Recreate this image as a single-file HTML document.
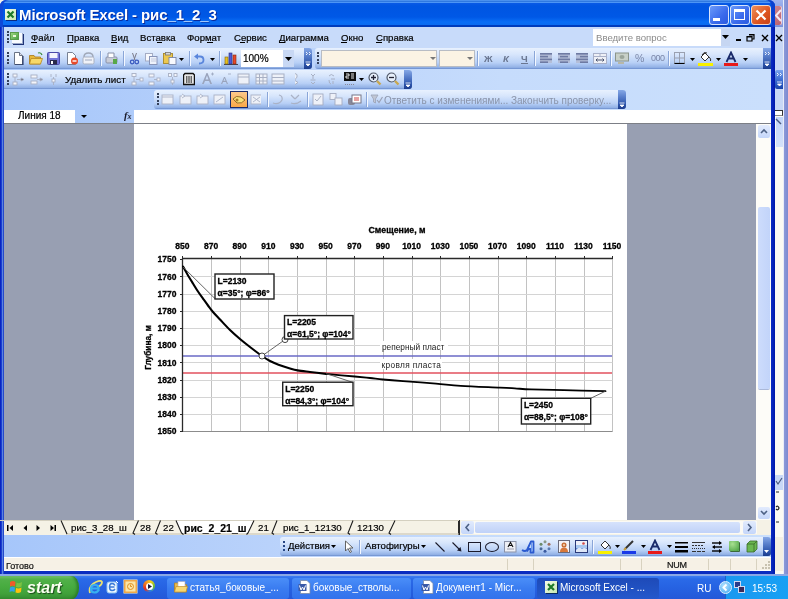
<!DOCTYPE html>
<html><head><meta charset="utf-8">
<style>
*{margin:0;padding:0;box-sizing:border-box}
.t,svg{will-change:transform}
html,body{width:788px;height:599px;overflow:hidden;background:#f4f2ea;font-family:"Liberation Sans",sans-serif;}
.a{position:absolute}
.t{position:absolute;white-space:nowrap;line-height:1}
#title{left:0;top:0;width:775px;height:27px;border-radius:6px 6px 0 0;box-shadow:inset -3.5px 0 0 #0a40d0,inset 3px 0 0 #1048d8;
 background:linear-gradient(#4a90ee 0,#4a90ee 1px,#2f78e0 1px,#2f78e0 2px,#4d95f5 2px,#4d95f5 3px,#0a5ae6 3px,#0055e2 6px,#0058e6 17px,#0a6ef5 22px,#0a6cf0 25px,#003cc0 25px,#003cb8 27px)}
.dock{background:linear-gradient(90deg,#a6c6fa 0,#bcd4fb 40%,#c6dcfc 65%,#cadffc 100%)}
.tb{position:absolute;border-radius:3px;background:linear-gradient(#e8f1fe 0,#d8e6fc 30%,#b8d0f6 70%,#93b2e6 92%,#6a8ccc 100%)}
.grip{position:absolute;width:2px;background:repeating-linear-gradient(#274684 0,#274684 2px,transparent 2px,transparent 4px)}
.chev{position:absolute;background:linear-gradient(#86a8e6,#5a80cc 35%,#2e56ac 75%,#1c3c8c);border-radius:0 3px 3px 0}
.sep{position:absolute;width:1px;background:#8aa6d8;box-shadow:1px 0 0 #f4f8ff}
.menu{font-size:9.6px;color:#000;top:33px}
.menu,.t[style*="color:#000"],.t[style*="color:#111"]{-webkit-text-stroke:0.2px currentColor}
</style></head><body>
<!-- background window behind (right) -->
<div class="a" style="left:770px;top:0;width:18px;height:575px;background:#fbfaf3"></div>
<div class="a" style="left:770px;top:0;width:18px;height:27px;background:linear-gradient(#a0b4ee,#8ea4e8 30%,#94aaec 80%,#7a90d8)"></div>
<div class="a" style="left:772px;top:6px;width:10px;height:19px;background:linear-gradient(135deg,#d08890,#b86070);border-radius:0 2px 2px 0;box-shadow:inset -1px 0 0 #e8d0e0"></div>
<svg class="a" style="left:772px;top:6px" width="10" height="19"><path d="M9 4L4 9.5L9 15" stroke="#f4e8f0" stroke-width="2" fill="none"/></svg>
<div class="a" style="left:770px;top:27px;width:14px;height:83px;background:#c8d8f6"></div>
<svg class="a" style="left:775px;top:34px" width="8" height="8"><path d="M1 1L7 7M7 1L1 7" stroke="#000" stroke-width="1.3"/></svg>
<div class="a" style="left:775px;top:70px;width:9px;height:19px;background:linear-gradient(#7aa4ee,#2a5cc8 70%,#1a44a8);border-radius:2px 0 0 2px"></div>
<svg class="a" style="left:775px;top:70px" width="9" height="19"><path d="M2 3L3.5 4.5L2 6M5 3L6.5 4.5L5 6" stroke="#fff" stroke-width="0.9" fill="none"/><path d="M2 12H7M2.5 14H6.5L4.5 16Z" stroke="#fff" stroke-width="0.8" fill="#fff"/></svg>
<div class="a" style="left:775px;top:110px;width:8px;height:6px;background:#fff;border-top:1px solid #333;border-right:1.5px solid #333;border-bottom:1px solid #888"></div>
<div class="a" style="left:776px;top:117px;width:7px;height:30px;background:linear-gradient(#c4d6f8,#d4e2fa)"></div>
<svg class="a" style="left:775px;top:117px" width="8" height="10"><path d="M1 2L6 7" stroke="#4a5a80" stroke-width="1.4"/></svg>
<div class="a" style="left:775px;top:475px;width:8px;height:15px;background:#c8d8f6"></div>
<svg class="a" style="left:775px;top:475px" width="8" height="60"><path d="M1 6L3 9L7 3" stroke="#4a5a80" stroke-width="1.2" fill="none"/><path d="M1 17H4M1 32Q3 30 4 33Q3 36 1 34M1 47H4" stroke="#222" stroke-width="1.2" fill="none"/></svg>
<div class="a" style="left:775px;top:537px;width:9px;height:34px;background:#f4efe2"></div>
<div class="a" style="left:783px;top:0;width:1px;height:575px;background:#e8ecf8"></div>
<div class="a" style="left:784px;top:0;width:4px;height:575px;background:linear-gradient(90deg,#8c9ad8,#7c8ad0)"></div>
<!-- main window frame -->
<div class="a" style="left:0;top:0;width:775px;height:575px;background:linear-gradient(90deg,#0018b8 0,#1a3ed0 1.5px,#5a82e0 2.5px,#0a2cc0 4px,#0a2cc0 771px,#0828c0 772px,#0018a8 775px);border-radius:7px 7px 0 0"></div>
<div id="title" class="a"></div>
<div class="a" style="left:5px;top:9px;width:11px;height:11px;background:linear-gradient(135deg,#f4fbe8,#c8e8b0);box-shadow:1px 1px 0 #0a2a80"></div>
<svg class="a" style="left:5px;top:9px" width="11" height="11"><path d="M2.5 2.5L8.5 8.5M8.5 2.5L2.5 8.5" stroke="#1e7a2a" stroke-width="2.2"/></svg>
<div class="t" style="left:18.5px;top:7px;font-size:15px;letter-spacing:-0.12px;font-weight:bold;color:#fff;text-shadow:1px 1px 0 #0a2a9a">Microsoft Excel - рис_1_2_3</div>
<!-- title buttons -->
<div class="a" style="left:709px;top:5px;width:20px;height:20px;border:1px solid #d8e4fc;border-radius:3px;background:linear-gradient(135deg,#6a9afa,#3a6aec 60%,#2a5ae0)"></div>
<div class="a" style="left:713px;top:18px;width:7px;height:3px;background:#fff"></div>
<div class="a" style="left:730px;top:5px;width:20px;height:20px;border:1px solid #d8e4fc;border-radius:3px;background:linear-gradient(135deg,#6a9afa,#3a6aec 60%,#2a5ae0)"></div>
<div class="a" style="left:734px;top:9px;width:11px;height:11px;border:1.2px solid #fff;border-top-width:3px"></div>
<div class="a" style="left:751px;top:5px;width:20px;height:20px;border:1px solid #f4d8c8;border-radius:3px;background:linear-gradient(135deg,#f0905a,#dc5420 60%,#c84418)"></div>
<svg class="a" style="left:751px;top:5px" width="20" height="20"><path d="M5.5 5.5L14.5 14.5M14.5 5.5L5.5 14.5" stroke="#fff" stroke-width="2.2"/></svg>

<!-- client area background (dock) -->
<div class="a dock" style="left:4px;top:27px;width:767px;height:97px"></div>


<!-- menu bar -->
<div class="a" style="left:4px;top:27px;width:767px;height:21px;background:#c8dbfa"></div>
<div class="grip" style="left:6.5px;top:31px;height:12px;width:2px;background:repeating-linear-gradient(#34405a 0,#34405a 2px,transparent 2px,transparent 3.4px)"></div>
<div class="a" style="left:12px;top:33px;width:11px;height:11px;background:#f8fbff;box-shadow:1px 1px 0 #1f3377,inset -1px -1px 0 #9aa8c8"></div>
<div class="a" style="left:10px;top:32px;width:9px;height:8px;background:linear-gradient(135deg,#a8dc88,#3f9a3c);box-shadow:inset 0 0 0 1px #5a9a4a"></div>
<div class="a" style="left:13px;top:35px;width:3px;height:2px;background:#eaf6d8"></div>
<div class="t menu" style="left:31px">Файл</div>
<div class="t menu" style="left:67px">Правка</div>
<div class="t menu" style="left:111px">Вид</div>
<div class="t menu" style="left:140px">Вставка</div>
<div class="t menu" style="left:187px">Формат</div>
<div class="t menu" style="left:234px">Сервис</div>
<div class="t menu" style="left:279px">Диаграмма</div>
<div class="t menu" style="left:341px">Окно</div>
<div class="t menu" style="left:376px">Справка</div>
<!-- menu underlines -->
<div class="a" style="left:31px;top:42px;width:6px;height:1px;background:#000"></div>
<div class="a" style="left:67px;top:42px;width:6px;height:1px;background:#000"></div>
<div class="a" style="left:111px;top:42px;width:6px;height:1px;background:#000"></div>
<div class="a" style="left:157px;top:42px;width:5px;height:1px;background:#000"></div>
<div class="a" style="left:207px;top:42px;width:6px;height:1px;background:#000"></div>
<div class="a" style="left:240px;top:42px;width:5px;height:1px;background:#000"></div>
<div class="a" style="left:279px;top:42px;width:6px;height:1px;background:#000"></div>
<div class="a" style="left:341px;top:42px;width:6px;height:1px;background:#000"></div>
<div class="a" style="left:376px;top:42px;width:6px;height:1px;background:#000"></div>
<!-- ask box -->
<div class="a" style="left:593px;top:29px;width:128px;height:17px;background:#fff"></div>
<div class="t" style="left:596px;top:33px;font-size:9.6px;color:#8a8a8a">Введите вопрос</div>
<div class="a" style="left:721px;top:29px;width:9px;height:17px;background:#c6d6f2"></div>
<svg class="a" style="left:722px;top:35px" width="7" height="4"><path d="M0 0H7L3.5 4Z" fill="#000"/></svg>
<div class="a" style="left:736px;top:39px;width:5px;height:2px;background:#000"></div>
<svg class="a" style="left:746px;top:33px" width="9" height="9"><path d="M3 1.5H8V6H6.5M1 3.5H6V8H1Z" stroke="#000" stroke-width="1.2" fill="none"/><rect x="3" y="1" width="5" height="1.5" fill="#000"/><rect x="1" y="3" width="5" height="1.5" fill="#000"/></svg>
<svg class="a" style="left:761px;top:34px" width="8" height="8"><path d="M1 1L7 7M7 1L1 7" stroke="#000" stroke-width="1.4"/></svg>

<!-- standard toolbar -->
<div class="tb" style="left:4px;top:48px;width:308px;height:21px;border-radius:0 3px 3px 0"></div>
<div class="grip" style="left:6.5px;top:52px;height:12px;width:2px;background:repeating-linear-gradient(#34405a 0,#34405a 2px,transparent 2px,transparent 3.4px)"></div>
<svg class="a" style="left:13px;top:52px" width="11" height="13"><path d="M1.5 0.5H6.5L9.5 3.5V12.5H1.5Z" fill="#fff" stroke="#5a6478" stroke-width="0.9"/><path d="M6.5 0.5V3.5H9.5" fill="#dde" stroke="#5a6478" stroke-width="0.9"/><path d="M10 4V13H2" stroke="#1a2a5a" stroke-width="1" fill="none"/></svg>
<svg class="a" style="left:29px;top:52px" width="14" height="13"><path d="M0.5 3.5H5L6 5H11.5V12H0.5Z" fill="#e8b838" stroke="#a87818" stroke-width="0.8"/><path d="M2 6.5H13.5L11.5 12H0.5Z" fill="#f8d868" stroke="#b88820" stroke-width="0.8"/><path d="M9 1Q12 0 13 3" stroke="#3a8a3a" stroke-width="1.2" fill="none"/></svg>
<svg class="a" style="left:47px;top:52px" width="13" height="13"><rect x="0.5" y="0.5" width="12" height="12" rx="1" fill="#7274d8" stroke="#4a4aa8"/><rect x="2.5" y="1" width="8" height="5" fill="#f4f4fc"/><rect x="3" y="8" width="7" height="4.5" fill="#2a2a4a"/><rect x="4" y="9" width="2" height="3" fill="#fff"/></svg>
<svg class="a" style="left:66px;top:52px" width="13" height="13"><path d="M1.5 0.5H6.5L9.5 3.5V12.5H1.5Z" fill="#fff" stroke="#6a7488" stroke-width="0.9"/><circle cx="8.5" cy="9" r="3.5" fill="#e84a2a"/><rect x="6.5" y="8.3" width="4" height="1.4" fill="#fff"/></svg>
<svg class="a" style="left:82px;top:52px" width="13" height="13"><path d="M2 5Q2 1 6.5 1Q11 1 11 5" stroke="#a0a8b8" stroke-width="1.5" fill="none"/><rect x="1" y="5" width="11" height="7" rx="1.5" fill="#f0f2f8" stroke="#a8b0c0"/><rect x="3" y="7" width="7" height="2" fill="#c8cedc"/></svg>
<div class="sep" style="left:100px;top:51px;height:15px"></div>
<svg class="a" style="left:105px;top:52px" width="13" height="13"><rect x="1" y="5" width="11" height="6" rx="1" fill="#c8ccd8" stroke="#8890a8"/><path d="M3 5V1H9V5" fill="#fff" stroke="#8890a8"/><rect x="8" y="7" width="4" height="5" fill="#58a848"/></svg>
<div class="sep" style="left:123px;top:51px;height:15px"></div>
<svg class="a" style="left:129px;top:52px" width="11" height="13"><path d="M3.5 1L6 8M7.5 1L5 8" stroke="#7a7a88" stroke-width="1"/><circle cx="3.2" cy="10" r="1.8" fill="none" stroke="#3a5ac0" stroke-width="1.3"/><circle cx="7.8" cy="10" r="1.8" fill="none" stroke="#3a5ac0" stroke-width="1.3"/></svg>
<svg class="a" style="left:145px;top:53px" width="13" height="12"><rect x="0.5" y="0.5" width="7" height="7.5" fill="#f8f9fd" stroke="#a4acc4"/><rect x="4.5" y="3.5" width="7.5" height="8" fill="#eef2fb" stroke="#8894b8"/><path d="M6 6H11M6 8H11" stroke="#b8c0d8" stroke-width="0.8"/></svg>
<svg class="a" style="left:163px;top:52px" width="14" height="13"><rect x="0.5" y="1.5" width="9" height="10" fill="#ecc850" stroke="#a88828" stroke-width="0.9"/><rect x="2.5" y="0.5" width="5" height="2.5" fill="#d8d8d8" stroke="#777" stroke-width="0.8"/><rect x="6" y="5.5" width="7" height="7" fill="#f8f9fd" stroke="#7a86a8" stroke-width="0.9"/></svg>
<svg class="a" style="left:179px;top:58px" width="5" height="3"><path d="M0 0H5L2.5 3Z" fill="#000"/></svg>
<div class="sep" style="left:189px;top:51px;height:15px"></div>
<svg class="a" style="left:193px;top:53px" width="12" height="12"><path d="M4 3.5H7Q10.5 3.5 10.5 7Q10.5 10.5 6 10.5" stroke="#5a86dc" stroke-width="1.8" fill="none"/><path d="M1 3.5L5 0.5V6.5Z" fill="#5a86dc"/></svg>
<svg class="a" style="left:210px;top:58px" width="5" height="3"><path d="M0 0H5L2.5 3Z" fill="#000"/></svg>
<div class="sep" style="left:219px;top:51px;height:15px"></div>
<svg class="a" style="left:224px;top:52px" width="14" height="13"><rect x="0" y="12" width="14" height="1" fill="#445"/><rect x="1" y="5" width="3" height="7" fill="#e8c020" stroke="#806810" stroke-width="0.6"/><rect x="5" y="1" width="3" height="11" fill="#4a5ad8" stroke="#283078" stroke-width="0.6"/><rect x="9" y="3" width="3" height="9" fill="#e84828" stroke="#802810" stroke-width="0.6"/></svg>
<div class="a" style="left:241px;top:50px;width:42px;height:17px;background:#fff"></div>
<div class="t" style="left:243px;top:54px;font-size:10px;color:#000">100%</div>
<div class="a" style="left:283px;top:50px;width:11px;height:17px;background:#c8d8f4"></div>
<svg class="a" style="left:285px;top:57px" width="7" height="4"><path d="M0 0H7L3.5 4Z" fill="#000"/></svg>
<div class="chev" style="left:304px;top:48px;width:8px;height:21px"></div>
<svg class="a" style="left:304px;top:50px" width="8" height="18"><path d="M2 2L3.5 3.5L2 5M5 2L6.5 3.5L5 5" stroke="#fff" stroke-width="0.9" fill="none"/><path d="M1.5 12H6.5M2 14H6L4 16Z" stroke="#fff" stroke-width="0.8" fill="#fff"/></svg>

<!-- formatting toolbar -->
<div class="tb" style="left:315px;top:48px;width:456px;height:21px;border-radius:3px 0 0 3px"></div>
<div class="grip" style="left:317px;top:52px;height:12px;width:2px;background:repeating-linear-gradient(#34405a 0,#34405a 2px,transparent 2px,transparent 3.4px)"></div>
<div class="a" style="left:321px;top:50px;width:116px;height:17px;background:#fbf3e4;border:1px solid #b8bcc4"></div>
<svg class="a" style="left:430px;top:57px" width="6" height="3"><path d="M0 0H6L3 3Z" fill="#777"/></svg>
<div class="a" style="left:439px;top:50px;width:36px;height:17px;background:#fbf3e4;border:1px solid #b8bcc4"></div>
<svg class="a" style="left:467px;top:57px" width="6" height="3"><path d="M0 0H6L3 3Z" fill="#777"/></svg>
<div class="sep" style="left:477px;top:51px;height:15px"></div>
<div class="t" style="left:483.5px;top:53.5px;font-size:9.5px;font-weight:bold;color:#6a7690">Ж</div>
<div class="t" style="left:502.5px;top:53.5px;font-size:9.5px;font-weight:bold;font-style:italic;color:#6a7690">К</div>
<div class="t" style="left:520.5px;top:53.5px;font-size:9.5px;font-weight:bold;color:#6a7690">Ч</div>
<div class="a" style="left:520.5px;top:62.5px;width:7px;height:1px;background:#6a7690"></div>
<div class="sep" style="left:534px;top:51px;height:15px"></div>
<svg class="a" style="left:540px;top:53px" width="70" height="11">
<rect x="0" y="0" width="12" height="10" fill="#b4bed8"/><rect x="18" y="0" width="12" height="10" fill="#b4bed8"/><rect x="36" y="0" width="12" height="10" fill="#b4bed8"/>
<g fill="#6e7aa2"><rect x="0" y="0" width="12" height="1.6"/><rect x="0" y="2.8" width="8" height="1.6"/><rect x="0" y="5.6" width="12" height="1.6"/><rect x="0" y="8.4" width="8" height="1.6"/>
<rect x="18" y="0" width="12" height="1.6"/><rect x="20" y="2.8" width="8" height="1.6"/><rect x="18" y="5.6" width="12" height="1.6"/><rect x="20" y="8.4" width="8" height="1.6"/>
<rect x="36" y="0" width="12" height="1.6"/><rect x="40" y="2.8" width="8" height="1.6"/><rect x="36" y="5.6" width="12" height="1.6"/><rect x="40" y="8.4" width="8" height="1.6"/></g>
<rect x="53.5" y="0.5" width="13" height="10" fill="#eef0f6" stroke="#a8b0c8"/><path d="M53.5 3.5H66.5M60 0.5V3.5" stroke="#a8b0c8"/><path d="M56 7H64M57.5 5.5L56 7L57.5 8.5M62.5 5.5L64 7L62.5 8.5" stroke="#4a5470" fill="none"/></svg>
<div class="sep" style="left:610px;top:51px;height:15px"></div>
<svg class="a" style="left:615px;top:52px" width="14" height="13"><rect x="0.5" y="1" width="13" height="8" fill="#c8d0c8" stroke="#8a948a"/><ellipse cx="7" cy="5" rx="2.5" ry="2" fill="#9aa49a"/><rect x="3" y="10" width="6" height="2" fill="#b8b8a8"/></svg>
<div class="t" style="left:635px;top:53px;font-size:10.5px;color:#7a86a8">%</div>
<div class="t" style="left:651px;top:54px;font-size:9px;color:#7a86a8;letter-spacing:-0.5px">000</div>
<div class="sep" style="left:668px;top:51px;height:15px"></div>
<svg class="a" style="left:674px;top:52px" width="11" height="12"><rect x="0.5" y="0.5" width="10" height="11" fill="none" stroke="#9aa0b0"/><path d="M5.5 0.5V11.5M0.5 6H10.5" stroke="#9aa0b0"/><path d="M0.5 11.5H10.5" stroke="#000" stroke-width="1.2"/></svg>
<svg class="a" style="left:690px;top:58px" width="5" height="3"><path d="M0 0H5L2.5 3Z" fill="#000"/></svg>
<svg class="a" style="left:698px;top:51px" width="15" height="15"><path d="M3 6L7 2L11 6L7 10Z" fill="#fff" stroke="#333"/><path d="M4 4Q6 0 9 2" stroke="#333" fill="none"/><path d="M11 6Q13.5 8 12.5 10" stroke="#333" fill="none"/><rect x="0" y="12" width="15" height="3" fill="#f8f000"/></svg>
<svg class="a" style="left:716px;top:58px" width="5" height="3"><path d="M0 0H5L2.5 3Z" fill="#000"/></svg>
<svg class="a" style="left:724px;top:51px" width="14" height="15"><path d="M2.5 11L7 1.5L11.5 11M4.3 7.5H9.7" stroke="#1a2a6a" stroke-width="1.8" fill="none"/><rect x="0" y="12" width="14" height="3" fill="#e81a1a"/></svg>
<svg class="a" style="left:743px;top:58px" width="5" height="3"><path d="M0 0H5L2.5 3Z" fill="#000"/></svg>
<div class="chev" style="left:763px;top:48px;width:8px;height:21px;border-radius:0"></div>
<svg class="a" style="left:763px;top:50px" width="8" height="18"><path d="M2 2L3.5 3.5L2 5M5 2L6.5 3.5L5 5" stroke="#fff" stroke-width="0.9" fill="none"/><path d="M1.5 12H6.5M2 14H6L4 16Z" stroke="#fff" stroke-width="0.8" fill="#fff"/></svg>

<!-- row 3 toolbar (chart) -->
<div class="tb" style="left:4px;top:70px;width:408px;height:19px;border-radius:0 3px 3px 0"></div>
<div class="grip" style="left:6.5px;top:73px;height:12px;width:2px;background:repeating-linear-gradient(#34405a 0,#34405a 2px,transparent 2px,transparent 3.4px)"></div>
<svg class="a" style="left:12px;top:73px" width="150" height="13"><g stroke="#a8b0c4" fill="#f4f6fb" stroke-width="0.9">
<rect x="1" y="1" width="4" height="3"/><rect x="1" y="9" width="4" height="3"/><path d="M3 4V9M5 6.5H9"/><path d="M9 5L12 6.5L9 8Z" fill="#556"/>
<rect x="19" y="2" width="6" height="3"/><rect x="19" y="8" width="6" height="3"/><path d="M25 6.5H29"/><path d="M28 5L31 6.5L28 8Z" fill="#889"/>
<path d="M39 1V4M44 1V4M41.5 4V12"/><rect x="40" y="6" width="3" height="3"/>
<rect x="120" y="0.5" width="4" height="3"/><rect x="120" y="9" width="4" height="3"/><path d="M122 3.5V9M124 6.5H128"/><rect x="128" y="5" width="3" height="3"/>
<rect x="137" y="1" width="5" height="3"/><rect x="137" y="9" width="5" height="3"/><path d="M142 6.5H145"/><rect x="145" y="5" width="3" height="3"/>
</g></svg>
<div class="t" style="left:65px;top:74.5px;font-size:9.8px;color:#000">Удалить лист</div>
<svg class="a" style="left:168px;top:73px" width="10" height="13"><g stroke="#a8b0c4" fill="#f4f6fb" stroke-width="0.9"><rect x="0.5" y="0.5" width="3" height="3"/><rect x="6" y="0.5" width="3" height="3"/><path d="M4.5 4V12"/><rect x="3" y="7" width="3" height="3"/></g></svg>
<svg class="a" style="left:183px;top:72px" width="12" height="14"><path d="M2 1.5H10L11.5 3V12.5H0.5V3Z" fill="#e8e8e8" stroke="#111" stroke-width="1.4"/><rect x="3" y="4" width="6" height="7" fill="#666"/><path d="M4.5 4V11M6 4V11M7.5 4V11" stroke="#ddd" stroke-width="0.6"/></svg>
<svg class="a" style="left:202px;top:72px" width="30" height="14"><g fill="#9aa4bc"><path d="M0 12L4.5 1H5.5L10 12H8.3L7 9H3L1.7 12ZM3.5 7.5H6.5L5 3.5Z"/><path d="M9 2H12M10.5 0.5V3.5" stroke="#9aa4bc" stroke-width="0.8"/>
<path d="M19 12L22 5H23L26 12H24.8L24 10H21L20.2 12ZM21.5 8.7H23.5L22.5 6.3Z"/><path d="M26 2H29" stroke="#9aa4bc" stroke-width="0.8"/></g></svg>
<svg class="a" style="left:237px;top:73px" width="65" height="13"><g stroke="#a8b0c4" fill="#eef1f8" stroke-width="1">
<rect x="1" y="1" width="11" height="10"/><path d="M1 4H12"/>
<rect x="19" y="1" width="11" height="10"/><path d="M19 4.5H30M19 8H30M22.5 1V11M26 1V11"/>
<rect x="35" y="1" width="12" height="10"/><path d="M35 4.5H47M35 8H47"/>
<path d="M58 0.5Q61 1 60 4Q59 6 58 6.5M58 7.5L61 9.5L58 11.5"/>
</g></svg>
<svg class="a" style="left:310px;top:73px" width="30" height="13"><g stroke="#a8b0c4" fill="none" stroke-width="1">
<path d="M1 1L3 3L5 1M3 3V6M1 9L3 11L5 9M0.5 7H5.5"/>
<path d="M19 3Q21 0 24 3M19 7Q19 11 21 11M23 8V11M21 6H25"/>
</g></svg>
<div class="a" style="left:344px;top:72px;width:12px;height:9px;background:#101010"></div>
<svg class="a" style="left:344px;top:72px" width="12" height="14"><path d="M2 2H5V4H2V6H5M7 2H10M7 4H10M7 6H10" stroke="#fff" stroke-width="0.9" fill="none"/><path d="M1 12.5H11" stroke="#889" stroke-dasharray="1 1"/></svg>
<svg class="a" style="left:359px;top:78px" width="5" height="3"><path d="M0 0H5L2.5 3Z" fill="#000"/></svg>
<svg class="a" style="left:368px;top:72px" width="14" height="14"><circle cx="5.5" cy="5.5" r="4.5" fill="#e8f0fc" stroke="#505868" stroke-width="1.2"/><path d="M3 5.5H8M5.5 3V8" stroke="#223" stroke-width="1.3"/><path d="M9 9L12.5 12.5" stroke="#c8a850" stroke-width="2.4"/></svg>
<svg class="a" style="left:386px;top:72px" width="14" height="14"><circle cx="5.5" cy="5.5" r="4.5" fill="#e8f0fc" stroke="#505868" stroke-width="1.2"/><path d="M3 5.5H8" stroke="#223" stroke-width="1.3"/><path d="M9 9L12.5 12.5" stroke="#c8a850" stroke-width="2.4"/></svg>
<div class="chev" style="left:404px;top:70px;width:8px;height:19px"></div>
<svg class="a" style="left:404px;top:70px" width="8" height="19"><path d="M1.5 13H6.5M2 15H6L4 17Z" stroke="#fff" stroke-width="0.8" fill="#fff"/></svg>

<!-- row 4 reviewing toolbar -->
<div class="tb" style="left:154px;top:90px;width:472px;height:19px"></div>
<div class="grip" style="left:156.5px;top:93px;height:12px;width:2px;background:repeating-linear-gradient(#34405a 0,#34405a 2px,transparent 2px,transparent 3.4px)"></div>
<svg class="a" style="left:161px;top:93px" width="100" height="13"><g stroke="#aab2c6" fill="#eef1f8" stroke-width="0.9">
<rect x="1" y="2" width="11" height="9"/><path d="M1 4H12"/>
<rect x="19" y="3" width="11" height="8"/><path d="M21 1L24 3L21 5"/>
<rect x="36" y="3" width="11" height="8"/><path d="M39 1L42 3L39 5"/>
<rect x="53" y="2" width="11" height="9"/><path d="M55 9L62 4"/>
<rect x="90" y="2" width="11" height="9"/><path d="M92 4L99 9M92 9L99 4"/>
</g></svg>
<div class="a" style="left:230px;top:91px;width:18px;height:17px;background:linear-gradient(#fcc88a,#f8a848);border:1px solid #1a2a6a"></div>
<svg class="a" style="left:232px;top:94px" width="14" height="12"><path d="M1 5Q4 1 9 3L13 6Q10 10 5 9Z" fill="#f8e078" stroke="#886020" stroke-width="0.9"/><circle cx="5" cy="6" r="1.5" fill="#a87828"/></svg>
<div class="sep" style="left:267px;top:92px;height:15px"></div>
<svg class="a" style="left:271px;top:93px" width="34" height="13"><g stroke="#aab2c6" fill="none" stroke-width="1.2"><path d="M2 10Q8 12 11 7Q12 3 8 2"/><path d="M20 2L24 6M28 2L24 6M20 10Q25 12 30 8"/></g></svg>
<div class="sep" style="left:307px;top:92px;height:15px"></div>
<svg class="a" style="left:312px;top:93px" width="50" height="13"><g stroke="#a4acc0" fill="#eef1f8" stroke-width="0.9">
<rect x="1" y="1" width="10" height="11"/><path d="M3 6L5 8L9 3"/>
<rect x="18" y="0.5" width="6" height="6"/><rect x="23" y="5" width="7" height="7"/>
</g><g><rect x="36" y="5" width="7" height="7" rx="2" fill="#889" /><rect x="40" y="2" width="9" height="8" fill="#fff" stroke="#778"/><path d="M42 5H47M42 7H47" stroke="#c44"/></g></svg>
<div class="sep" style="left:366px;top:92px;height:15px"></div>
<svg class="a" style="left:370px;top:94px" width="13" height="11"><path d="M1 1H8L5.5 5V9L3.5 8V5Z" fill="#c0c6d4" stroke="#9aa2b6" stroke-width="0.8"/><path d="M7 6L9 8.5L12.5 3" stroke="#9aa2b6" stroke-width="1.2" fill="none"/></svg>
<div class="t" style="left:384px;top:96px;font-size:10px;color:#8a94aa">Ответить с изменениями...</div>
<div class="t" style="left:511px;top:96px;font-size:10px;color:#8a94aa">Закончить проверку...</div>
<div class="chev" style="left:618px;top:90px;width:8px;height:19px"></div>
<svg class="a" style="left:618px;top:90px" width="8" height="19"><path d="M1.5 13H6.5M2 15H6L4 17Z" stroke="#fff" stroke-width="0.8" fill="#fff"/></svg>

<!-- formula bar -->
<div class="a" style="left:4px;top:110px;width:71px;height:13px;background:#fff"></div>
<div class="t" style="left:18px;top:111px;font-size:10px;color:#000">Линия 18</div>
<svg class="a" style="left:81px;top:115px" width="6" height="3"><path d="M0 0H6L3 3Z" fill="#000"/></svg>
<div class="t" style="left:124px;top:111px;font-size:10.5px;font-style:italic;font-family:'Liberation Serif',serif;color:#1a1a2a;font-weight:bold">f<span style="font-size:8px">x</span></div>
<div class="a" style="left:134px;top:110px;width:637px;height:13px;background:#fff"></div>
<div class="a" style="left:4px;top:123px;width:767px;height:1px;background:#7c7f86"></div>
<!-- chart sheet area -->
<div class="a" style="left:4px;top:124px;width:752px;height:396px;background:#989fb2"></div>
<div class="a" style="left:134px;top:124px;width:493px;height:396px;background:#fff"></div>
<!--CHART-->
<svg class="a" style="left:134px;top:124px" width="493" height="396" viewBox="134 124 493 396">
<path d="M211.5 259V431.5M240.5 259V431.5M268.5 259V431.5M297.5 259V431.5M326.5 259V431.5M354.5 259V431.5M383.5 259V431.5M412.5 259V431.5M440.5 259V431.5M469.5 259V431.5M498.5 259V431.5M526.5 259V431.5M555.5 259V431.5M584.5 259V431.5M612.5 259V431.5" stroke="#c2c2c2" stroke-width="1" fill="none"/>
<path d="M182.5 276.5H612.5M182.5 294.5H612.5M182.5 311.5H612.5M182.5 328.5H612.5M182.5 345.5H612.5M182.5 362.5H612.5M182.5 380.5H612.5M182.5 397.5H612.5M182.5 414.5H612.5M182.5 431.5H612.5" stroke="#d4d4d4" stroke-width="1" fill="none"/>
<path d="M183 356H612" stroke="#6a6ac6" stroke-width="1.5"/>
<path d="M183 373H612" stroke="#e2505e" stroke-width="1.4"/>
<path d="M182.5 431.5H612.5" stroke="#8c8c8c" stroke-width="1.2" fill="none"/>
<path d="M182.5 258.5H612.5M182.5 258.5V431.5" stroke="#2a2a2a" stroke-width="1.3" fill="none"/>
<path d="M182.5 256V259M211.5 256V259M240.5 256V259M268.5 256V259M297.5 256V259M326.5 256V259M354.5 256V259M383.5 256V259M412.5 256V259M440.5 256V259M469.5 256V259M498.5 256V259M526.5 256V259M555.5 256V259M584.5 256V259M612.5 256V259M180 259.5H183M180 276.5H183M180 294.5H183M180 311.5H183M180 328.5H183M180 345.5H183M180 362.5H183M180 380.5H183M180 397.5H183M180 414.5H183M180 431.5H183" stroke="#2a2a2a" stroke-width="1" fill="none"/>
<g font-family="Liberation Sans" font-weight="bold" font-size="8.5" fill="#000" stroke="#000" stroke-width="0.3"><text x="182.4" y="249" text-anchor="middle">850</text><text x="211.1" y="249" text-anchor="middle">870</text><text x="239.7" y="249" text-anchor="middle">890</text><text x="268.4" y="249" text-anchor="middle">910</text><text x="297.0" y="249" text-anchor="middle">930</text><text x="325.6" y="249" text-anchor="middle">950</text><text x="354.3" y="249" text-anchor="middle">970</text><text x="382.9" y="249" text-anchor="middle">990</text><text x="411.6" y="249" text-anchor="middle">1010</text><text x="440.2" y="249" text-anchor="middle">1030</text><text x="468.9" y="249" text-anchor="middle">1050</text><text x="497.5" y="249" text-anchor="middle">1070</text><text x="526.2" y="249" text-anchor="middle">1090</text><text x="554.9" y="249" text-anchor="middle">1110</text><text x="583.5" y="249" text-anchor="middle">1130</text><text x="612.1" y="249" text-anchor="middle">1150</text><text x="176.5" y="262.3" text-anchor="end">1750</text><text x="176.5" y="279.5" text-anchor="end">1760</text><text x="176.5" y="296.7" text-anchor="end">1770</text><text x="176.5" y="313.9" text-anchor="end">1780</text><text x="176.5" y="331.1" text-anchor="end">1790</text><text x="176.5" y="348.3" text-anchor="end">1800</text><text x="176.5" y="365.5" text-anchor="end">1810</text><text x="176.5" y="382.7" text-anchor="end">1820</text><text x="176.5" y="399.9" text-anchor="end">1830</text><text x="176.5" y="417.1" text-anchor="end">1840</text><text x="176.5" y="434.3" text-anchor="end">1850</text></g>
<text x="368.5" y="233" font-family="Liberation Sans" font-weight="bold" font-size="8.8" fill="#000" stroke="#000" stroke-width="0.3">Смещение, м</text>
<text transform="translate(150.5 347.5) rotate(-90)" text-anchor="middle" font-family="Liberation Sans" font-weight="bold" font-size="8.3" fill="#000" stroke="#000" stroke-width="0.3">Глубина, м</text>
<rect x="380" y="341" width="68" height="9" fill="#fff"/>
<rect x="380" y="359" width="62" height="10" fill="#fff"/>
<text x="382" y="349.5" font-family="Liberation Sans" font-size="8.3" fill="#222">реперный пласт</text>
<text x="381.5" y="367.5" font-family="Liberation Sans" font-size="8.3" fill="#222" letter-spacing="0.35">кровля пласта</text>
<path d="M183 266.5 C183.75 267.83 185.83 271.67 187.5 274.5 C189.17 277.33 191.25 280.67 193 283.5 C194.75 286.33 196.33 288.98 198 291.5 C199.67 294.02 201.33 296.27 203 298.6 C204.67 300.93 206.33 303.27 208 305.5 C209.67 307.73 211.00 309.67 213 312 C215.00 314.33 217.17 316.50 220 319.5 C222.83 322.50 226.67 326.75 230 330 C233.33 333.25 236.67 336.17 240 339 C243.33 341.83 246.33 344.17 250 347 C253.67 349.83 258.67 353.67 262 356 C265.33 358.33 267.25 359.55 270 361 C272.75 362.45 275.17 363.45 278.5 364.7 C281.83 365.95 286.82 367.55 290 368.5 C293.18 369.45 294.27 369.82 297.6 370.4 C300.93 370.98 305.27 371.42 310 372 C314.73 372.58 323.33 373.58 326 373.9" stroke="#000" stroke-width="2.1" fill="none" stroke-linecap="round"/>
<path d="M326 373.9 C330.78 374.33 347.37 375.82 354.7 376.5 C362.03 377.18 365.28 377.50 370 378 C374.72 378.50 377.50 378.97 383 379.5 C388.50 380.03 394.17 380.52 403 381.2 C411.83 381.88 426.37 382.83 436 383.6 C445.63 384.37 450.13 385.13 460.8 385.8 C471.47 386.47 491.00 387.17 500 387.6 C509.00 388.03 509.63 388.10 514.8 388.4 C519.97 388.70 522.80 389.10 531 389.4 C539.20 389.70 551.58 389.90 564 390.2 C576.42 390.50 598.58 391.03 605.5 391.2" stroke="#000" stroke-width="1.8" fill="none" stroke-linecap="round"/>
<path d="M183 267L215 298.6M262 356L285 339.6M326 373.5L352.8 382.4M590.7 398.3L605.5 391.2" stroke="#555" stroke-width="0.9" fill="none"/>
<circle cx="262" cy="356" r="3" fill="#fff" stroke="#333" stroke-width="0.9"/>
<circle cx="285" cy="339.6" r="3" fill="#fff" stroke="#333" stroke-width="0.9"/>
<rect x="215" y="274" width="59" height="25" fill="#fff" stroke="#222" stroke-width="1.4"/>
<text x="217.5" y="283.5" font-family="Liberation Sans" font-weight="bold" font-size="8.5" fill="#000" stroke="#000" stroke-width="0.3">L=2130</text>
<text x="217.5" y="295.5" font-family="Liberation Sans" font-weight="bold" font-size="8.5" fill="#000" stroke="#000" stroke-width="0.3">α=35°; φ=86°</text>
<rect x="284.5" y="315.6" width="68.5" height="23.399999999999977" fill="#fff" stroke="#222" stroke-width="1.4"/>
<text x="287.0" y="325.1" font-family="Liberation Sans" font-weight="bold" font-size="8.5" fill="#000" stroke="#000" stroke-width="0.3">L=2205</text>
<text x="287.0" y="337.1" font-family="Liberation Sans" font-weight="bold" font-size="8.5" fill="#000" stroke="#000" stroke-width="0.3">α=61,5°; φ=104°</text>
<rect x="282.7" y="382.2" width="70.30000000000001" height="23.5" fill="#fff" stroke="#222" stroke-width="1.4"/>
<text x="285.2" y="391.7" font-family="Liberation Sans" font-weight="bold" font-size="8.5" fill="#000" stroke="#000" stroke-width="0.3">L=2250</text>
<text x="285.2" y="403.7" font-family="Liberation Sans" font-weight="bold" font-size="8.5" fill="#000" stroke="#000" stroke-width="0.3">α=84,3°; φ=104°</text>
<rect x="521.4" y="398.3" width="69.30000000000007" height="25.69999999999999" fill="#fff" stroke="#222" stroke-width="1.4"/>
<text x="523.9" y="407.8" font-family="Liberation Sans" font-weight="bold" font-size="8.5" fill="#000" stroke="#000" stroke-width="0.3">L=2450</text>
<text x="523.9" y="419.8" font-family="Liberation Sans" font-weight="bold" font-size="8.5" fill="#000" stroke="#000" stroke-width="0.3">α=88,5°; φ=108°</text>
</svg>
<!--/CHART-->


<!-- vertical scrollbar -->
<div class="a" style="left:756px;top:124px;width:15px;height:396px;background:#fdfcf8"></div>
<div class="a" style="left:758px;top:125px;width:12px;height:13px;background:linear-gradient(#e2ebfd,#c4d6fa);border-radius:2px"></div>
<svg class="a" style="left:758px;top:125px" width="12" height="13"><path d="M3 8L6 5L9 8" stroke="#4d6185" stroke-width="1.6" fill="none"/></svg>
<div class="a" style="left:758px;top:207px;width:12px;height:182px;background:linear-gradient(90deg,#cddcfc,#c2d4fa);border-radius:2px;box-shadow:0 1px 0 #aab8d8"></div>
<div class="a" style="left:758px;top:507px;width:12px;height:12px;background:linear-gradient(#e2ebfd,#c4d6fa);border-radius:2px"></div>
<svg class="a" style="left:758px;top:507px" width="12" height="12"><path d="M3 4L6 7L9 4" stroke="#4d6185" stroke-width="1.6" fill="none"/></svg>

<!-- sheet tabs + hscroll -->
<div class="a" style="left:4px;top:520px;width:767px;height:15px;background:#f5f2e6"></div>
<div class="a" style="left:461px;top:521px;width:296px;height:13px;background:#fbfaf5"></div>
<div class="a" style="left:461px;top:521px;width:13px;height:13px;background:linear-gradient(#e2ebfd,#c4d6fa);border-radius:2px"></div>
<svg class="a" style="left:461px;top:521px" width="13" height="13"><path d="M8 3L5 6.5L8 10" stroke="#4d6185" stroke-width="1.6" fill="none"/></svg>
<div class="a" style="left:475px;top:522px;width:265px;height:11px;background:linear-gradient(#d6e2fc,#c0d2f8);border-radius:2px"></div>
<div class="a" style="left:743px;top:521px;width:13px;height:13px;background:linear-gradient(#e2ebfd,#c4d6fa);border-radius:2px"></div>
<svg class="a" style="left:743px;top:521px" width="13" height="13"><path d="M5 3L8 6.5L5 10" stroke="#4d6185" stroke-width="1.6" fill="none"/></svg>
<div class="a" style="left:458px;top:520px;width:2px;height:15px;background:#2a2a2a"></div>


<!-- tab nav -->
<svg class="a" style="left:4px;top:520px" width="60" height="15"><g fill="#000"><rect x="3" y="5" width="1.5" height="6"/><path d="M9 5L5.5 8L9 11Z"/><path d="M23 5L19.5 8L23 11Z"/><path d="M32.5 5L36 8L32.5 11Z"/><path d="M46.5 5L50 8L46.5 11Z"/><rect x="50.5" y="5" width="1.5" height="6"/></g></svg>
<!-- tabs -->
<svg class="a" style="left:0;top:520px" width="460" height="15">
<path d="M176 0.5L183 14H247L254 0.5Z" fill="#fff"/>
<path d="M0 0.5H459" stroke="#d4d0c0" stroke-width="1"/>
<path d="M66 14H459" stroke="#c4bfae" stroke-width="1"/>
<g fill="none" stroke="#1a1a1a" stroke-width="1.1">
<path d="M61 0.5L67 14"/>
<path d="M138.5 0.5L133 13L135 14.5"/>
<path d="M160.5 0.5L155.5 13L157.5 14.5"/>
<path d="M176 0.5L181.5 13L183.5 14.5"/>
<path d="M254 0.5L248 13L246.5 14.5"/>
<path d="M277 0.5L272 13L274 14.5"/>
<path d="M353 0.5L348 13L350 14.5"/>
<path d="M395 0.5L389 13L391 14.5"/>
</g>
</svg>
<div class="t" style="left:71px;top:523px;font-size:9.7px;color:#000">рис_3_28_ш</div>
<div class="t" style="left:140px;top:523px;font-size:9.7px;color:#000">28</div>
<div class="t" style="left:163px;top:523px;font-size:9.7px;color:#000">22</div>
<div class="t" style="left:184px;top:523px;font-size:10.5px;font-weight:bold;color:#000">рис_2_21_ш</div>
<div class="t" style="left:258px;top:523px;font-size:9.7px;color:#000">21</div>
<div class="t" style="left:283px;top:523px;font-size:9.7px;color:#000">рис_1_12130</div>
<div class="t" style="left:357px;top:523px;font-size:9.7px;color:#000">12130</div>
<!-- drawing toolbar dock -->
<div class="a dock" style="left:4px;top:535px;width:767px;height:22px"></div>

<!-- drawing toolbar -->
<div class="tb" style="left:280px;top:537px;width:491px;height:19px"></div>
<div class="grip" style="left:283px;top:541px;height:12px"></div>
<div class="t" style="left:288px;top:541px;font-size:9.6px;color:#000">Действия</div>
<svg class="a" style="left:331px;top:545px" width="5" height="3"><path d="M0 0H5L2.5 3Z" fill="#000"/></svg>
<svg class="a" style="left:344px;top:540px" width="10" height="13"><path d="M1.5 1V11L4 8.5L6 12.5L7.5 11.8L5.5 8H9Z" fill="#fff" stroke="#555" stroke-width="0.9"/></svg>
<div class="sep" style="left:359px;top:540px;height:14px"></div>
<div class="t" style="left:365px;top:541px;font-size:9.6px;color:#000">Автофигуры</div>
<svg class="a" style="left:421px;top:545px" width="5" height="3"><path d="M0 0H5L2.5 3Z" fill="#000"/></svg>
<svg class="a" style="left:434px;top:540px" width="12" height="13"><path d="M1.5 2.5L10.5 11.5" stroke="#1a1a2a" stroke-width="1.1"/></svg>
<svg class="a" style="left:451px;top:540px" width="12" height="13"><path d="M1.5 2.5L8.5 9.5" stroke="#1a1a2a" stroke-width="1.1"/><path d="M10.5 11.5L6 10.5L9.5 7Z" fill="#1a1a2a"/></svg>
<div class="a" style="left:468px;top:542px;width:13px;height:10px;border:1.3px solid #1a1a2a"></div>
<div class="a" style="left:485px;top:542px;width:14px;height:10px;border:1.3px solid #1a1a2a;border-radius:50%"></div>
<svg class="a" style="left:504px;top:540px" width="13" height="13"><rect x="0.5" y="1.5" width="11.5" height="10.5" fill="#eef0f6" stroke="#8a92a8"/><path d="M4 7L6.5 2.5L9 7M5 5.5H8" stroke="#111" stroke-width="1.1" fill="none"/><path d="M3 9H10" stroke="#889" stroke-width="0.8"/></svg>
<svg class="a" style="left:521px;top:540px" width="14" height="14"><path d="M1 10Q4 12 6 10L10 1.5H12.5V12.5H9.5V9H7.5L6 11.5" fill="none" stroke="#2a5ad0" stroke-width="1.8" stroke-linejoin="round"/><path d="M10.5 3V11.5" stroke="#6a9af0" stroke-width="1"/></svg>
<svg class="a" style="left:539px;top:540px" width="12" height="13"><g><circle cx="6" cy="1.8" r="1.5" fill="#8a9a8a"/><circle cx="10" cy="4.3" r="1.5" fill="#a07060"/><circle cx="10" cy="8.7" r="1.5" fill="#5a7ab0"/><circle cx="6" cy="11.2" r="1.5" fill="#3a5aa0"/><circle cx="2" cy="8.7" r="1.5" fill="#4a6a9a"/><circle cx="2" cy="4.3" r="1.5" fill="#6a8a6a"/></g></svg>
<svg class="a" style="left:558px;top:540px" width="12" height="13"><rect x="0.5" y="0.5" width="11" height="12" fill="#f4f4f8" stroke="#6a6a7a"/><circle cx="6" cy="5" r="2.5" fill="#c86a30"/><path d="M2 12Q2 7.5 6 7.5Q10 7.5 10 12Z" fill="#d8783a"/><circle cx="6" cy="5" r="1.2" fill="#f0c8a0"/></svg>
<svg class="a" style="left:575px;top:540px" width="13" height="13"><rect x="0.5" y="0.5" width="12" height="12" fill="#a8c8f0" stroke="#2a3a7a"/><rect x="1" y="1" width="11" height="4" fill="#eef0f8"/><rect x="1" y="8" width="11" height="4" fill="#5a86d4"/><path d="M1 10Q4 6 7 9Q9 7 12 9V12H1Z" fill="#fff" opacity="0.8"/><circle cx="8.5" cy="3.5" r="1.3" fill="#d04a4a"/></svg>
<div class="sep" style="left:592px;top:540px;height:14px"></div>
<svg class="a" style="left:598px;top:539px" width="14" height="15"><path d="M3 6L7 2L11 6L7 10Z" fill="#fff" stroke="#333"/><path d="M11 6Q13 8 12 10" stroke="#333" fill="none"/><rect x="0" y="12" width="14" height="3" fill="#f8f000"/></svg>
<svg class="a" style="left:615px;top:545px" width="5" height="3"><path d="M0 0H5L2.5 3Z" fill="#000"/></svg>
<svg class="a" style="left:622px;top:539px" width="14" height="15"><path d="M3 10L11 2" stroke="#333" stroke-width="2"/><path d="M2 11L4 9" stroke="#c8a040" stroke-width="2"/><rect x="0" y="12" width="14" height="3" fill="#1a3ae8"/></svg>
<svg class="a" style="left:641px;top:545px" width="5" height="3"><path d="M0 0H5L2.5 3Z" fill="#000"/></svg>
<svg class="a" style="left:648px;top:539px" width="14" height="15"><path d="M2.5 11L7 1.5L11.5 11M4.3 7.5H9.7" stroke="#1a2a6a" stroke-width="1.8" fill="none"/><rect x="0" y="12" width="14" height="3" fill="#e81a1a"/></svg>
<svg class="a" style="left:667px;top:545px" width="5" height="3"><path d="M0 0H5L2.5 3Z" fill="#000"/></svg>
<svg class="a" style="left:675px;top:541px" width="14" height="12"><rect x="0" y="1" width="13" height="1.5" fill="#000"/><rect x="0" y="5" width="13" height="2" fill="#000"/><rect x="0" y="9" width="13" height="2.5" fill="#000"/></svg>
<svg class="a" style="left:692px;top:541px" width="14" height="12"><g fill="#333"><rect x="0" y="1" width="13" height="1"/><rect x="0" y="4" width="2" height="1"/><rect x="3" y="4" width="2" height="1"/><rect x="6" y="4" width="2" height="1"/><rect x="9" y="4" width="2" height="1"/><rect x="0" y="7" width="1" height="1"/><rect x="2" y="7" width="1" height="1"/><rect x="4" y="7" width="1" height="1"/><rect x="6" y="7" width="1" height="1"/><rect x="8" y="7" width="1" height="1"/><rect x="10" y="7" width="1" height="1"/><rect x="12" y="7" width="1" height="1"/><rect x="0" y="10" width="4" height="1"/><rect x="5" y="10" width="4" height="1"/><rect x="10" y="10" width="3" height="1"/></g></svg>
<svg class="a" style="left:711px;top:540px" width="12" height="14"><g stroke="#000" stroke-width="1.4" fill="#000"><path d="M1 3H10"/><path d="M2 7H11"/><path d="M1 11H10"/></g><path d="M8 1L11 3L8 5Z" fill="#000"/><path d="M4 5L1 7L4 9Z" fill="#000"/><path d="M8 9L11 11L8 13Z" fill="#000"/></svg>
<div class="a" style="left:729px;top:541px;width:10px;height:10px;background:radial-gradient(circle at 35% 30%,#a8e090,#48a040);border-radius:1px;box-shadow:1px 1px 0 #3a6a3a"></div>
<svg class="a" style="left:746px;top:540px" width="12" height="13"><path d="M1 4L4 1H11V9L8 12H1Z" fill="#6ab850" stroke="#3a6a2a" stroke-width="0.8"/><path d="M1 4H8V12M8 4L11 1" stroke="#3a6a2a" stroke-width="0.8" fill="none"/></svg>
<div class="chev" style="left:763px;top:537px;width:8px;height:19px"></div>
<svg class="a" style="left:763px;top:549px" width="8" height="6"><path d="M1 1H6L3.5 4Z" fill="#fff"/></svg>
<!-- status bar -->
<div class="a" style="left:4px;top:557px;width:767px;height:14px;background:#f6f1e6;border-top:1px solid #fff;border-bottom:1px solid #fff"></div>
<div class="t" style="left:6px;top:562px;font-size:9px;color:#111">Готово</div>
<div class="a" style="left:507px;top:559px;width:1px;height:11px;background:#d8d2c0"></div>
<div class="a" style="left:533px;top:559px;width:1px;height:11px;background:#d8d2c0"></div>
<div class="a" style="left:620px;top:559px;width:1px;height:11px;background:#d8d2c0"></div>
<div class="a" style="left:641px;top:559px;width:1px;height:11px;background:#d8d2c0"></div>
<div class="a" style="left:708px;top:559px;width:1px;height:11px;background:#d8d2c0"></div>
<div class="a" style="left:730px;top:559px;width:1px;height:11px;background:#d8d2c0"></div>
<div class="a" style="left:756px;top:559px;width:1px;height:11px;background:#d8d2c0"></div>
<div class="t" style="left:667px;top:561px;font-size:9px;color:#111;letter-spacing:-0.3px">NUM</div>
<svg class="a" style="left:761px;top:559px" width="10" height="11"><g fill="#c8c2b0"><rect x="7" y="2" width="2" height="2"/><rect x="4" y="5" width="2" height="2"/><rect x="7" y="5" width="2" height="2"/><rect x="1" y="8" width="2" height="2"/><rect x="4" y="8" width="2" height="2"/><rect x="7" y="8" width="2" height="2"/></g></svg>


<!-- taskbar -->
<div class="a" style="left:0;top:574px;width:788px;height:2px;background:#8aa8e6"></div>
<div class="a" style="left:0;top:576px;width:788px;height:23px;background:linear-gradient(#3c7ef4 0,#2a6ae8 3px,#2662e2 12px,#2458d8 23px)"></div>
<div class="a" style="left:0;top:576px;width:79px;height:23px;border-radius:0 9px 9px 0/0 14px 14px 0;background:linear-gradient(#7ac870 0,#52b04a 3px,#48ac40 10px,#40a03a 18px,#348c30 23px);box-shadow:inset -3px 0 3px -1px #2a7a28"></div>
<svg class="a" style="left:9px;top:580px" width="14" height="14"><path d="M1 2Q4 0 6.5 2L6 6.5Q3.5 5 1 6.5Z" fill="#f05a28"/><path d="M7.5 2.5Q10 4 13 2L12.5 6.5Q10 8 7 7Z" fill="#7cc242"/><path d="M1 7.5Q3.5 6 6 7.5L5.5 12Q3 10.5 0.5 12Z" fill="#32a0e6"/><path d="M7 8Q9.5 9 12.5 7.5L12 12Q9.5 13.5 6.5 12.5Z" fill="#fdc20c"/></svg>
<div class="t" style="left:27px;top:580px;font-size:16px;font-weight:bold;font-style:italic;color:#fff;text-shadow:1px 1px 1px #1a4a1a;color:#fafff0">start</div>
<!-- quick launch -->
<svg class="a" style="left:88px;top:580px" width="15" height="15"><path d="M2 13Q0 6 8 2Q13 0 14 2Q14 5 10 7" stroke="#e8e070" stroke-width="1.8" fill="none"/><path d="M11 9.5Q9.5 12.5 6.5 12.5Q3 12.5 3 9Q3 5 7 5Q10.5 5 10.5 8.5H4" stroke="#38b0f0" stroke-width="2.2" fill="none"/></svg>
<svg class="a" style="left:106px;top:580px" width="13" height="14"><rect x="1" y="2" width="10" height="11" rx="2" fill="#f0f8ff" stroke="#8ac0f0" stroke-width="1"/><path d="M9 5.5Q8 3.5 6 3.5Q3.5 3.5 3.5 7Q3.5 10.5 6 10.5Q8 10.5 9 9M4 7H8.5" stroke="#3a7ad8" stroke-width="1.5" fill="none"/><path d="M10 1L12 3" stroke="#fff" stroke-width="1"/></svg>
<div class="a" style="left:124px;top:580px;width:13px;height:13px;background:#fbe6a8;box-shadow:inset 0 0 0 1.5px #f0a848,0 0 0 0.5px #fff0c0"></div>
<div class="a" style="left:127px;top:583px;width:7px;height:7px;border-radius:50%;border:1.4px solid #e09020"></div>
<svg class="a" style="left:127px;top:583px" width="7" height="7"><path d="M3.5 1.5V3.5H5" stroke="#e09020" stroke-width="1" fill="none"/></svg>
<div class="a" style="left:143px;top:580px;width:12px;height:12px;border-radius:50%;background:conic-gradient(from 20deg,#f8d020,#70c030,#2a80e0,#e03020,#f08020,#f8d020)"></div>
<div class="a" style="left:145.5px;top:582.5px;width:7px;height:7px;border-radius:50%;background:#fff"></div>
<svg class="a" style="left:146px;top:583px" width="7" height="7"><path d="M2 1L6 3.5L2 6Z" fill="#1a1a3a"/></svg>
<!-- task buttons -->
<div class="a" style="left:167px;top:578px;width:122px;height:21px;border-radius:3px;background:linear-gradient(#4a8ef8,#3a7cf0 50%,#3272ec)"></div>
<svg class="a" style="left:174px;top:580px" width="14" height="13"><path d="M0.5 3H5L6 4.5H12.5V12H0.5Z" fill="#e8b848" stroke="#b08020" stroke-width="0.7"/><rect x="4" y="1.5" width="7" height="7" fill="#fff" stroke="#aab" stroke-width="0.6"/><path d="M2 6.5H13.5L12 12H0.5Z" fill="#f8d870" stroke="#c09030" stroke-width="0.7"/></svg>
<div class="t" style="left:190px;top:583px;font-size:10px;color:#fff">статья_боковые_...</div>
<div class="a" style="left:292px;top:578px;width:119px;height:21px;border-radius:3px;background:linear-gradient(#4a8ef8,#3a7cf0 50%,#3272ec)"></div>
<svg class="a" style="left:298px;top:580px" width="13" height="14"><path d="M2.5 0.5H9L12 3.5V13.5H2.5Z" fill="#fff" stroke="#7a8aa8" stroke-width="0.8"/><rect x="0.5" y="4" width="8" height="7" fill="#3a5aa8"/><path d="M1.5 5.5L3 10L4.5 7L6 10L7.5 5.5" stroke="#fff" stroke-width="1" fill="none"/></svg>
<div class="t" style="left:313px;top:583px;font-size:10px;color:#fff">боковые_стволы...</div>
<div class="a" style="left:413px;top:578px;width:122px;height:21px;border-radius:3px;background:linear-gradient(#4a8ef8,#3a7cf0 50%,#3272ec)"></div>
<svg class="a" style="left:421px;top:580px" width="13" height="14"><path d="M2.5 0.5H9L12 3.5V13.5H2.5Z" fill="#fff" stroke="#7a8aa8" stroke-width="0.8"/><rect x="0.5" y="4" width="8" height="7" fill="#3a5aa8"/><path d="M1.5 5.5L3 10L4.5 7L6 10L7.5 5.5" stroke="#fff" stroke-width="1" fill="none"/></svg>
<div class="t" style="left:436px;top:583px;font-size:10px;color:#fff">Документ1 - Micr...</div>
<div class="a" style="left:537px;top:578px;width:122px;height:21px;border-radius:3px;background:linear-gradient(#1e4ab8,#2050c0 40%,#2458cc)"></div>
<div class="a" style="left:545px;top:581px;width:12px;height:12px;background:linear-gradient(135deg,#f4fbe8,#c8e8b0);box-shadow:1px 1px 0 #0a2a60"></div>
<svg class="a" style="left:545px;top:581px" width="12" height="12"><path d="M3 3L9 9M9 3L3 9" stroke="#1e7a2a" stroke-width="2.2"/></svg>
<div class="t" style="left:560px;top:583px;font-size:10px;color:#fff">Microsoft Excel - ...</div>
<div class="t" style="left:697px;top:584px;font-size:10px;color:#fff">RU</div>
<div class="a" style="left:725px;top:576px;width:63px;height:23px;background:linear-gradient(90deg,#1a98f0,#18a0f4);border-left:1px solid #1a62c8"></div>
<div class="a" style="left:719px;top:581px;width:13px;height:13px;border-radius:50%;background:radial-gradient(circle at 40% 35%,#b8e4ff,#3aa4f0);border:1px solid #e0f0ff"></div>
<svg class="a" style="left:719px;top:581px" width="13" height="13"><path d="M7.5 3.5L4.5 6.5L7.5 9.5" stroke="#fff" stroke-width="1.8" fill="none"/></svg>
<div class="a" style="left:734px;top:581px;width:7px;height:7px;background:#2a3a8a;border:1px solid #d0d8f0"></div>
<div class="a" style="left:738px;top:586px;width:7px;height:7px;background:#3a2a5a;border:1px solid #d0d8f0"></div>
<div class="t" style="left:752px;top:584px;font-size:10px;color:#fff">15:53</div>
</body></html>
